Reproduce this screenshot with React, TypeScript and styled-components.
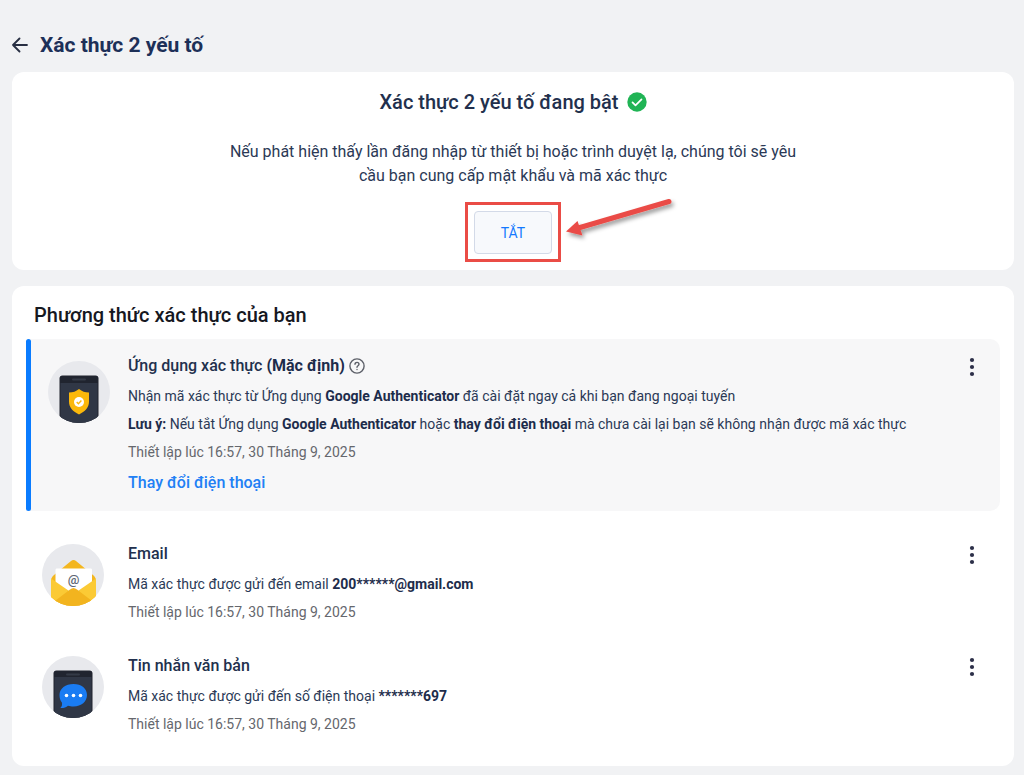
import React from "react";
import styled, { createGlobalStyle } from "styled-components";

const GlobalStyle = createGlobalStyle`
  *, *::before, *::after { box-sizing: border-box; }
  body {
    margin: 0;
    background: #f1f2f4;
    color: #2b3956;
    font-family: Roboto, "Noto Sans", sans-serif;
    font-size: 14px;
  }
  h1, h2, h3, p { margin: 0; }
  b { color: #1d2c4b; }
  button { font-family: inherit; cursor: pointer; }
`;

const Page = styled.div`
  padding: 0 10px 8px 12px;
`;

const Header = styled.header`
  display: flex;
  align-items: center;
  gap: 12px;
  height: 72px;
  padding-top: 18px;
`;

const BackButton = styled.button`
  display: flex;
  padding: 0;
  border: 0;
  background: none;
`;

const PageTitle = styled.h1`
  font-size: 21px;
  line-height: 28px;
  font-weight: 700;
  color: #1d3058;
`;

const Card = styled.section`
  background: #fff;
  border-radius: 12px;
`;

const StatusCard = styled(Card)`
  display: flex;
  flex-direction: column;
  align-items: center;
  margin-bottom: 16px;
  padding: 16px 24px;
  text-align: center;
`;

const StatusTitle = styled.h2`
  display: flex;
  align-items: center;
  gap: 8px;
  font-size: 20px;
  line-height: 28px;
  font-weight: 500;
  color: #22304d;
`;

const StatusText = styled.p`
  max-width: 580px;
  margin: 24px 0 23px;
  font-size: 16px;
  line-height: 24px;
`;

const ButtonWrap = styled.div`
  position: relative;
`;

const DisableButton = styled.button`
  display: block;
  width: 78px;
  height: 43px;
  border: 1px solid #d3dae8;
  border-radius: 4px;
  background: #f7f9fc;
  color: #1479ff;
  font-size: 14px;
`;

const Highlight = styled.span`
  position: absolute;
  inset: -9px -9px -8px;
  border: 3px solid #ea4c46;
  pointer-events: none;
`;

const Arrow = styled.svg`
  position: absolute;
  left: 88px;
  top: -18px;
  pointer-events: none;
`;

const MethodsCard = styled(Card)`
  padding: 15px 14px;
`;

const MethodsTitle = styled.h2`
  margin-bottom: 10px;
  padding-left: 8px;
  font-size: 20px;
  line-height: 28px;
  font-weight: 500;
  color: #16181f;
`;

const Method = styled.article<{ $active?: boolean }>`
  position: relative;
  display: flex;
  padding: ${(p) => (p.$active ? "15px 16px 16px 22px" : "15px 16px 13px")};
  margin-bottom: ${(p) => (p.$active ? "16px" : "0")};
  background: ${(p) => (p.$active ? "#f7f7f8" : "transparent")};
  border-radius: 4px 10px 10px 4px;

  &::before {
    content: "";
    display: ${(p) => (p.$active ? "block" : "none")};
    position: absolute;
    inset: 0 auto 0 0;
    width: 5px;
    border-radius: 3px;
    background: #0a7cff;
  }
`;

const MethodIcon = styled.svg<{ $active?: boolean }>`
  flex: none;
  width: 62px;
  height: 62px;
  margin-top: ${(p) => (p.$active ? "7px" : "2px")};
  margin-right: ${(p) => (p.$active ? "18px" : "24px")};
`;

const MethodBody = styled.div`
  flex: 1;
  min-width: 0;
`;

const MethodTitle = styled.h3`
  display: flex;
  align-items: center;
  gap: 4px;
  margin-bottom: 4px;
  font-size: 16px;
  line-height: 24px;
  font-weight: 500;
  color: #22304d;
`;

const MethodText = styled.p`
  line-height: 28px;
`;

const MethodDate = styled(MethodText)`
  color: #65676d;
`;

const ChangeLink = styled.a`
  display: inline-block;
  margin-top: 5px;
  font-size: 16px;
  line-height: 24px;
  font-weight: 500;
  color: #2280f5;
  text-decoration: none;
`;

const MenuButton = styled.button`
  display: flex;
  align-self: flex-start;
  padding: 1px 0;
  border: 0;
  background: none;
`;

const HelpButton = styled.button`
  display: flex;
  padding: 0;
  border: 0;
  background: none;
`;

const AtSign = styled.text`
  font: 500 13px Roboto, sans-serif;
  fill: #5d6673;
`;

function Menu({ label }: { label: string }) {
  return (
    <MenuButton type="button" aria-label={label}>
      <svg width="24" height="24" viewBox="0 0 24 24" fill="#2c2f48">
        <circle cx="12" cy="5" r="2.1" />
        <circle cx="12" cy="12" r="2.1" />
        <circle cx="12" cy="19" r="2.1" />
      </svg>
    </MenuButton>
  );
}

function AppIcon() {
  return (
    <MethodIcon $active viewBox="0 0 62 62" aria-hidden="true">
      <clipPath id="app-disc"><circle cx="31" cy="31" r="31" /></clipPath>
      <g clipPath="url(#app-disc)">
        <rect width="62" height="62" fill="#e8e9ed" />
        <rect x="11.500" y="14.500" width="39" height="56" rx="3" fill="#20242f" />
        <rect x="12.500" y="22" width="37" height="40" fill="#303746" />
        <rect x="24" y="17.500" width="14" height="2" rx="1" fill="#343a47" />
        <path d="M31 28c3 2.500 6 3.500 10 3.500v9c0 6-4 10-10 13-6-3-10-7-10-13v-9c4 0 7-1 10-3.500z" fill="#fbb80b" />
        <circle cx="31" cy="41" r="5" fill="#fff" />
        <path d="M28.700 41l1.700 1.700 3-3.200" fill="none" stroke="#fbb80b" strokeWidth="1.400" />
      </g>
    </MethodIcon>
  );
}

function EmailIcon() {
  return (
    <MethodIcon viewBox="0 0 62 62" aria-hidden="true">
      <clipPath id="mail-disc"><circle cx="31" cy="31" r="31" /></clipPath>
      <g clipPath="url(#mail-disc)">
        <rect width="62" height="62" fill="#e8e9ed" />
        <path d="M9 37c0-3 1-4 3-6l17-14c1.500-1.500 3.500-1.500 5 0l17 14c2 2 3 3 3 6v25H9z" fill="#f3b61f" />
        <path d="M13.500 26c0-1 .5-1.500 1.500-1.500h33.500c1 0 1.500.5 1.500 1.500v22h-36.500z" fill="#fff" />
        <path d="M9 34.500L31.500 50 9 63zM54 34.500L31.500 50 54 63z" fill="#fbca35" />
        <path d="M9 60l19-14.500c2.500-2 4.500-2 7 0L54 60v4H9z" fill="#f2b41f" />
        <AtSign x="31.500" y="40" textAnchor="middle">@</AtSign>
      </g>
    </MethodIcon>
  );
}

function SmsIcon() {
  return (
    <MethodIcon viewBox="0 0 62 62" aria-hidden="true">
      <clipPath id="sms-disc"><circle cx="31" cy="31" r="31" /></clipPath>
      <g clipPath="url(#sms-disc)">
        <rect width="62" height="62" fill="#e8e9ed" />
        <rect x="11.500" y="14.500" width="39" height="56" rx="3" fill="#20242f" />
        <rect x="12.500" y="21" width="37" height="41" fill="#303746" />
        <rect x="24" y="17.500" width="14" height="2" rx="1" fill="#343a47" />
        <path d="M31.500 28c8 0 13.500 4.500 13.500 11s-5.500 11.500-13.500 11.500c-2 0-4-.3-5.500-.8-2 1.800-4.500 2.500-7.700 2.300 1.500-1.500 2-3 1.700-5.300-1.700-2-2.500-4.500-2.500-7.700 0-6.500 6-11 14-11z" fill="#1a7cf3" />
        <g fill="#fff">
          <circle cx="24.500" cy="39.500" r="1.800" />
          <circle cx="31.500" cy="39.500" r="1.800" />
          <circle cx="38.500" cy="39.500" r="1.800" />
        </g>
      </g>
    </MethodIcon>
  );
}

export default function App() {
  return (
    <>
      <GlobalStyle />
      <Page>
        <Header>
          <BackButton type="button" aria-label="Quay lại">
            <svg width="16" height="16" viewBox="0 0 16 16" fill="none" stroke="#282f43" strokeWidth="1.800" strokeLinecap="round" strokeLinejoin="round">
              <path d="M15 8H1M7.500 1.500L1 8l6.500 6.500" />
            </svg>
          </BackButton>
          <PageTitle>Xác thực 2 yếu tố</PageTitle>
        </Header>
        <main>
          <StatusCard>
            <StatusTitle>
              Xác thực 2 yếu tố đang bật
              <svg width="20" height="20" viewBox="0 0 20 20" aria-hidden="true">
                <circle cx="10" cy="10" r="9.700" fill="#20b455" />
                <path d="M5.500 10.300l3 3 6-6" fill="none" stroke="#fff" strokeWidth="1.700" strokeLinecap="round" strokeLinejoin="round" />
              </svg>
            </StatusTitle>
            <StatusText>
              Nếu phát hiện thấy lần đăng nhập từ thiết bị hoặc trình duyệt lạ, chúng tôi sẽ yêu cầu bạn cung cấp mật khẩu và mã xác thực
            </StatusText>
            <ButtonWrap>
              <DisableButton type="button">TẮT</DisableButton>
              <Highlight />
              <Arrow width="120" height="56" viewBox="0 0 120 56" aria-hidden="true">
                <defs>
                  <filter id="arrow-shadow" x="-10%" y="-30%" width="130%" height="180%">
                    <feDropShadow dx="2" dy="3" stdDeviation="2" floodOpacity="0.4" />
                  </filter>
                </defs>
                <g filter="url(#arrow-shadow)">
                  <path d="M107 8.500L18 34.500" stroke="#ea4c46" strokeWidth="5" strokeLinecap="round" />
                  <path d="M4 38.500L15.500 28l5 14.500z" fill="#ea4c46" />
                </g>
              </Arrow>
            </ButtonWrap>
          </StatusCard>

          <MethodsCard>
            <MethodsTitle>Phương thức xác thực của bạn</MethodsTitle>
            <Method $active>
              <AppIcon />
              <MethodBody>
                <MethodTitle>
                  <span>Ứng dụng xác thực <b>(Mặc định)</b></span>
                  <HelpButton type="button" aria-label="Trợ giúp">
                    <svg width="16" height="16" viewBox="0 0 16 16" fill="none" stroke="#5d6069" strokeWidth="1.400" strokeLinecap="round">
                      <circle cx="8" cy="8" r="7.100" />
                      <path d="M6 6.300C6 3.700 10 3.800 10 6.300 10 7.700 8 7.700 8 9.200" />
                      <path d="M8 11.500v.1" />
                    </svg>
                  </HelpButton>
                </MethodTitle>
                <MethodText>
                  Nhận mã xác thực từ Ứng dụng <b>Google Authenticator</b> đã cài đặt ngay cả khi bạn đang ngoại tuyến
                </MethodText>
                <MethodText>
                  <b>Lưu ý:</b> Nếu tắt Ứng dụng <b>Google Authenticator</b> hoặc <b>thay đổi điện thoại</b> mà chưa cài lại bạn sẽ không nhận được mã xác thực
                </MethodText>
                <MethodDate>Thiết lập lúc 16:57, 30 Tháng 9, 2025</MethodDate>
                <ChangeLink href="#">Thay đổi điện thoại</ChangeLink>
              </MethodBody>
              <Menu label="Tùy chọn ứng dụng xác thực" />
            </Method>
            <Method>
              <EmailIcon />
              <MethodBody>
                <MethodTitle>Email</MethodTitle>
                <MethodText>Mã xác thực được gửi đến email <b>200******@gmail.com</b></MethodText>
                <MethodDate>Thiết lập lúc 16:57, 30 Tháng 9, 2025</MethodDate>
              </MethodBody>
              <Menu label="Tùy chọn email" />
            </Method>
            <Method>
              <SmsIcon />
              <MethodBody>
                <MethodTitle>Tin nhắn văn bản</MethodTitle>
                <MethodText>Mã xác thực được gửi đến số điện thoại <b>*******697</b></MethodText>
                <MethodDate>Thiết lập lúc 16:57, 30 Tháng 9, 2025</MethodDate>
              </MethodBody>
              <Menu label="Tùy chọn tin nhắn văn bản" />
            </Method>
          </MethodsCard>
        </main>
      </Page>
    </>
  );
}
